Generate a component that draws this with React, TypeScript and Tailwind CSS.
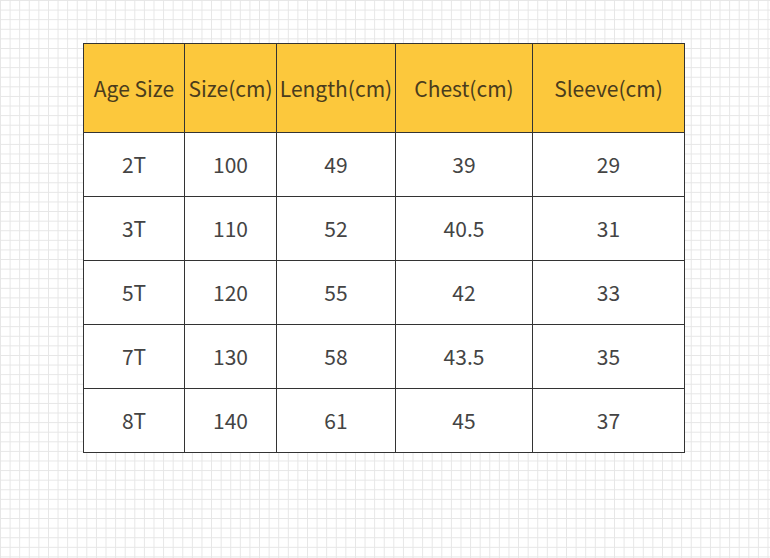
const headers = ["Age Size", "Size(cm)", "Length(cm)", "Chest(cm)", "Sleeve(cm)"];
const widths = ["w-[101px]", "w-[92px]", "w-[119px]", "w-[137px]", "w-[152px]"];

const rows = [
  ["2T", "100", "49", "39", "29"],
  ["3T", "110", "52", "40.5", "31"],
  ["5T", "120", "55", "42", "33"],
  ["7T", "130", "58", "43.5", "35"],
  ["8T", "140", "61", "45", "37"],
];

const App = () => {
  return (
    <div
      className="min-h-[558px] w-full bg-white bg-[linear-gradient(to_right,#e6e6e6_1px,transparent_1px),linear-gradient(to_bottom,#e6e6e6_1px,transparent_1px)] bg-[size:9.6px_9.6px] pl-[83px] pt-[43px]"
      style={{ fontFamily: '"Noto Sans CJK SC", "Noto Sans", sans-serif' }}
    >
      <table className="table-fixed border-collapse border border-[#333] text-[21px] leading-none">
        <thead>
          <tr className="h-[89px] bg-[#fcc83c]">
            {headers.map((h, i) => (
              <th
                key={h}
                className={`${widths[i]} border border-[#333] p-0 text-center font-normal text-[#4a3c1d]`}
              >
                {h}
              </th>
            ))}
          </tr>
        </thead>
        <tbody className="bg-white">
          {rows.map((r) => (
            <tr key={r[0]} className="h-[64px]">
              {r.map((c, i) => (
                <td key={i} className="border border-[#333] p-0 text-center text-[#444]">
                  {c}
                </td>
              ))}
            </tr>
          ))}
        </tbody>
      </table>
    </div>
  );
};

export default App;
